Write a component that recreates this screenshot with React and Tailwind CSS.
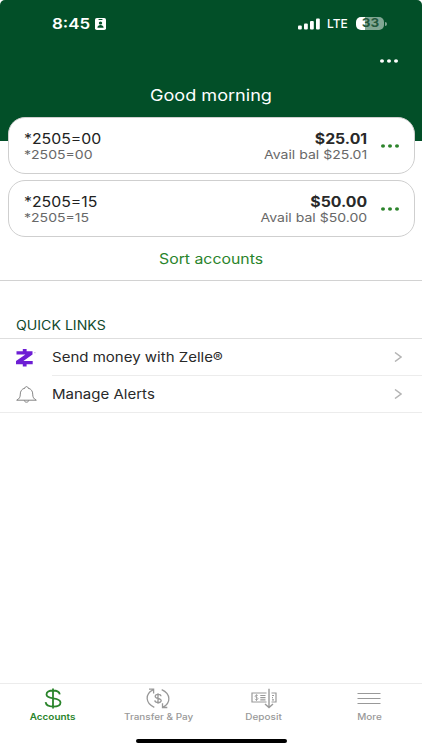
import React from 'react';

const accounts = [
  { id: 1, name: '*2505=00', number: '*2505=00', balance: '$25.01', available: 'Avail bal $25.01' },
  { id: 2, name: '*2505=15', number: '*2505=15', balance: '$50.00', available: 'Avail bal $50.00' },
];

function Dots({ className = '' }) {
  return (
    <svg viewBox="0 0 18 4" className={`h-1 w-[18px] shrink-0 ${className}`} fill="currentColor">
      <ellipse cx="2" cy="2" rx="2" ry="1.8" />
      <ellipse cx="9" cy="2" rx="2" ry="1.8" />
      <ellipse cx="16" cy="2" rx="2" ry="1.8" />
    </svg>
  );
}

function Chevron() {
  return (
    <svg viewBox="0 0 8 10" className="mr-5 h-2.5 w-2 shrink-0 text-[#b4b4b4]" fill="none" stroke="currentColor" strokeWidth="1.5">
      <path d="M1 .5 7 5 1 9.5" />
    </svg>
  );
}

function StatusBar() {
  return (
    <div className="flex h-12 items-center pl-[52px] pr-[35px] text-white">
      <span className="w-[38px] origin-left scale-x-[1.13] whitespace-nowrap text-[15px] font-semibold">8:45</span>
      <svg viewBox="0 0 11 12" className="ml-[5px] h-3 w-[11px]">
        <rect width="11" height="12" rx="1.8" fill="white" />
        <g fill="#024f28">
          <rect x="3.4" y="1" width="4.2" height="1" rx=".4" />
          <ellipse cx="5.5" cy="5" rx="1.7" ry="1.6" />
          <path d="M2.4 9.7c0-3.6 6.2-3.6 6.2 0z" />
        </g>
      </svg>
      <div className="ml-auto flex items-center">
        <svg viewBox="0 0 22 12" className="h-3 w-[22px]" fill="white">
          <rect x="0" y="7.5" width="3.8" height="4" rx="1" />
          <rect x="6" y="5.5" width="3.8" height="6" rx="1" />
          <rect x="12" y="3" width="3.8" height="8.5" rx="1" />
          <rect x="18" y=".5" width="3.8" height="11" rx="1" />
        </svg>
        <span className="ml-[7px] w-[22px] text-[12px] font-medium">LTE</span>
        <div className="mb-px ml-[7px] flex h-[13px] w-7 items-center justify-center rounded-[5px] bg-linear-to-r from-white from-33% to-[#81a793] to-33% text-[11.5px] font-bold leading-[13px] text-[#24593d]">
          <span className="scale-x-[1.17]">33</span>
        </div>
        <div className="mb-px ml-px h-1 w-[2px] rounded-r-full bg-[#81a793]" />
      </div>
    </div>
  );
}

function AccountCard({ account }) {
  return (
    <div className="flex h-[57px] items-center rounded-[17px] border border-[#cfcfcf] bg-white pl-[15px] pr-[14.5px]">
      <div className="flex flex-col pt-0.5">
        <span className="origin-left scale-x-[1.13] text-[14px] leading-4 text-[#222]">{account.name}</span>
        <span className="origin-left scale-x-[1.17] text-[12px] leading-[15px] text-[#686868]">{account.number}</span>
      </div>
      <div className="ml-auto flex flex-col pt-0.5 text-right">
        <span className="origin-right scale-x-[1.13] text-[14px] font-bold leading-4 text-[#292929]">{account.balance}</span>
        <span className="origin-right scale-x-[1.17] text-[12px] leading-[15px] text-[#686868]">{account.available}</span>
      </div>
      <Dots className="ml-3.5 text-[#2c842b]" />
    </div>
  );
}

function ZelleIcon() {
  return (
    <svg viewBox="0 0 21 18" className="h-[18px] w-[21px]">
      <g fill="#6d1ed4">
        <path d="M6.8 0h3.8v3.5H6.8zM6.8 14h3.8v3.5H6.8z" />
        <path d="M.5 2.3h16v3.2L7.4 12h9.3v3.2H0V12l9.4-6.5H.5z" />
      </g>
      <circle cx="18.9" cy="3.7" r=".6" fill="#b9a5cc" />
    </svg>
  );
}

function BellIcon() {
  return (
    <svg viewBox="0 0 21 17" className="h-[17px] w-[21px]" fill="none" stroke="#777" strokeWidth=".9" strokeLinejoin="round">
      <path d="M9 2.1c0-2 3-2 3 0 3.5.8 4.7 3.4 4.7 6 0 3.2 1 4.7 3.6 6.1H.7c2.6-1.4 3.6-2.9 3.6-6.1 0-2.6 1.2-5.2 4.7-6z" />
      <path d="M8.3 14.4c.2 2.4 4.2 2.4 4.4 0" />
    </svg>
  );
}

function DollarIcon() {
  return (
    <svg viewBox="0 0 18 21" className="h-[21px] w-[18px]" fill="none" stroke="currentColor" strokeWidth="1.8">
      <path d="M9 .5v20M15.8 6.4C15.3 3.8 12.8 2.5 9 2.5c-4 0-6.5 1.5-6.5 4 0 5.6 14 2.2 14 8 0 2.6-3 4.1-7.3 4.1-4.5 0-7.2-1.5-7.6-4.4" />
    </svg>
  );
}

function TransferIcon() {
  return (
    <svg viewBox="0 0 24 21" className="h-[21px] w-6" fill="none" stroke="currentColor" strokeWidth="1.3">
      <path d="M8.3 19.3C-1 15-1 6 7 1.9M3 1.2h4.6v4.3M15.7 1.7c9.3 4.3 9.3 13.3 1.3 17.4M21.3 19.5h-4.8v-4.3" />
      <path d="M12 5.2v10.6M15 8.3c-.2-2.5-5.8-2.6-5.8.1 0 2.7 6 1.3 6 4.2 0 2.8-6.1 2.7-6.4-.2" />
    </svg>
  );
}

function DepositIcon() {
  return (
    <svg viewBox="0 0 26 21" className="h-[21px] w-[26px]" fill="none" stroke="currentColor" strokeWidth="1.2">
      <path d="M15.5 5H1v9h14.5M20.5 5H25v9h-4.5" />
      <path d="M9.3 7.5h5.2M9.3 9.7h5.2M9.3 11.9h5.2M21 7.5h2M21 9.7h1M21 11.9h2" />
      <path d="M5.5 6.3V13M7 7.9c-.4-1-3-1-3 .3 0 1.5 3.1 1 3.1 2.5 0 1.3-2.8 1.3-3.3.2" strokeWidth=".8" />
      <path d="M18 .8v18.7M14 16l4 3.6 4-3.6" strokeWidth="1.4" />
    </svg>
  );
}

function MoreIcon() {
  return (
    <svg viewBox="0 0 24 21" className="h-[21px] w-6" fill="none" stroke="currentColor" strokeWidth="1.2">
      <path d="M.5 5.5h23M.5 10.5h23M.5 15.5h23" />
    </svg>
  );
}

const quickLinks = [
  { label: 'Send money with Zelle®', Icon: ZelleIcon, row: 'h-[37px]', border: 'border-[#ececec]' },
  { label: 'Manage Alerts', Icon: BellIcon, row: 'h-9', border: 'border-transparent' },
];

const tabs = [
  { label: 'Accounts', Icon: DollarIcon, color: 'text-[#2a842b]', weight: 'font-semibold' },
  { label: 'Transfer & Pay', Icon: TransferIcon, color: 'text-[#999]', weight: 'font-medium' },
  { label: 'Deposit', Icon: DepositIcon, color: 'text-[#999]', weight: 'font-medium' },
  { label: 'More', Icon: MoreIcon, color: 'text-[#999]', weight: 'font-medium' },
];

export default function App() {
  return (
    <div className="flex h-[750px] w-[422px] flex-col overflow-hidden bg-white font-['Inter',sans-serif]">
      <header className="h-[141px] shrink-0 rounded-t-[5px] bg-[#024f28] text-white">
        <StatusBar />
        <div className="flex h-[26px] items-center justify-end pr-[24.5px]">
          <Dots />
        </div>
        <h1 className="mt-[9px] text-center text-[16px] leading-6">
          <span className="inline-block scale-x-[1.13]">Good morning</span>
        </h1>
      </header>

      <section className="relative -mt-6 flex flex-col gap-1.5 border-b border-[#d2d2d2] px-[7.5px]">
        {accounts.map((account) => (
          <AccountCard key={account.id} account={account} />
        ))}
        <button className="h-[37px] pb-1.5 text-[14px] text-[#2a842b]">
          <span className="inline-block scale-x-[1.13]">Sort accounts</span>
        </button>
      </section>

      <section className="mt-[35px] border-b border-[#ececec]">
        <h2 className="flex h-[23px] items-center border-b border-[#dedede] pb-0.5 pl-4 text-[12.5px] text-[#10492c]">
          <span className="origin-left scale-x-[1.13]">QUICK LINKS</span>
        </h2>
        {quickLinks.map(({ label, Icon, row, border }) => (
          <div key={label} className={`flex items-stretch pl-4 ${row}`}>
            <div className="flex w-9 items-center">
              <Icon />
            </div>
            <div className={`flex flex-1 items-center justify-between border-b ${border}`}>
              <span className="origin-left scale-x-[1.155] pt-0.5 text-[13px] text-[#292929]">{label}</span>
              <Chevron />
            </div>
          </div>
        ))}
      </section>

      <nav className="mt-auto flex h-[67px] flex-col border-t border-[#ececec]">
        <div className="grid grid-cols-4">
          {tabs.map(({ label, Icon, color, weight }) => (
            <div key={label} className={`flex flex-col items-center pt-1 ${color}`}>
              <Icon />
              <span className={`mt-0.5 scale-x-[1.17] whitespace-nowrap text-[8.5px] leading-3 ${weight}`}>{label}</span>
            </div>
          ))}
        </div>
        <div className="mx-auto mb-[7px] mt-auto h-1 w-[151px] rounded-full bg-black" />
      </nav>
    </div>
  );
}
